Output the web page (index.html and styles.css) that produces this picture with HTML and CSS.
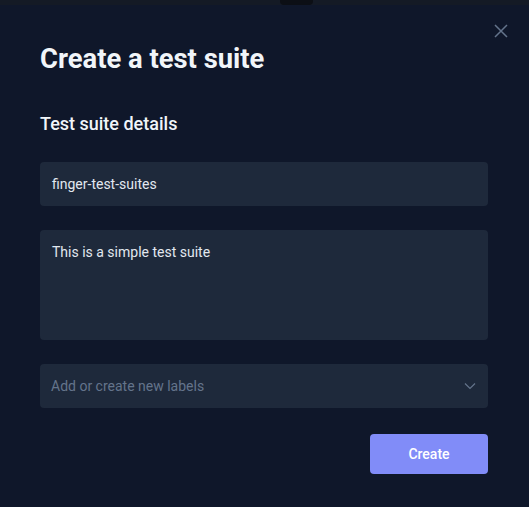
FILE: index.html
```html
<!DOCTYPE html>
<html>
<head>
<meta charset="utf-8">
<link rel="stylesheet" href="styles.css">
</head>
<body>
<div class="topbar"><div class="tab"></div></div>
<div class="modal">
  <button class="close" aria-label="Close">
    <svg width="14" height="14" viewBox="0 0 14 14"><path d="M1 1L13 13M13 1L1 13" stroke="#64748b" stroke-width="1.5" fill="none"/></svg>
  </button>
  <h1 class="title">Create a test suite</h1>
  <h2 class="subtitle">Test suite details</h2>
  <div class="form">
    <div class="field input">finger-test-suites</div>
    <div class="field textarea">This is a simple test suite</div>
    <div class="field select">
      <span class="placeholder">Add or create new labels</span>
      <svg width="12" height="8" viewBox="0 0 12 8"><path d="M1 1.5L6 6.5L11 1.5" stroke="#64748b" stroke-width="1.2" fill="none"/></svg>
    </div>
  </div>
  <div class="actions"><button class="btn">Create</button></div>
</div>
</body>
</html>
```
FILE: styles.css
```css
* { box-sizing: border-box; }
html, body { margin: 0; padding: 0; }
body {
  background: #0f172a;
  font-family: Roboto, "Noto Sans", sans-serif;
  width: 529px;
  height: 507px;
  overflow: hidden;
}
.topbar {
  height: 5px;
  background: #141a25;
  position: relative;
}
.tab {
  position: absolute;
  left: 280px;
  top: 0;
  width: 33px;
  height: 5px;
  background: #0c0f15;
  border-radius: 0 0 4px 4px;
}
.modal {
  position: relative;
  background: #0f172a;
  padding: 0 41px 0 40px;
}
.close {
  position: absolute;
  right: 21px;
  top: 19px;
  background: none;
  border: 0;
  padding: 0;
  width: 14px;
  height: 14px;
  display: flex;
}
.title {
  margin: 0;
  padding-top: 37px;
  font-size: 27.4px;
  line-height: 34px;
  font-weight: 700;
  color: #f1f5f9;
}
.subtitle {
  margin: 0;
  padding-top: 35px;
  font-size: 18px;
  line-height: 26px;
  font-weight: 500;
  color: #f1f5f9;
}
.form {
  margin-top: 25px;
  display: flex;
  flex-direction: column;
  gap: 24px;
}
.field {
  background: #1e293b;
  border-radius: 4px;
  font-size: 14px;
  color: #e2e8f0;
  padding: 0 12px;
}
.input {
  height: 44px;
  display: flex;
  align-items: center;
}
.textarea {
  height: 110px;
  padding-top: 12px;
  line-height: 20px;
}
.select {
  height: 44px;
  display: flex;
  align-items: center;
  justify-content: space-between;
  padding: 0 12px 0 11px;
}
.placeholder { color: #64748b; }
.actions {
  margin-top: 26px;
  display: flex;
  justify-content: flex-end;
}
.btn {
  width: 118px;
  height: 40px;
  background: #818cf8;
  border: 0;
  border-radius: 4px;
  color: #fff;
  font-family: Roboto, sans-serif;
  font-size: 14px;
  font-weight: 500;
}
```
